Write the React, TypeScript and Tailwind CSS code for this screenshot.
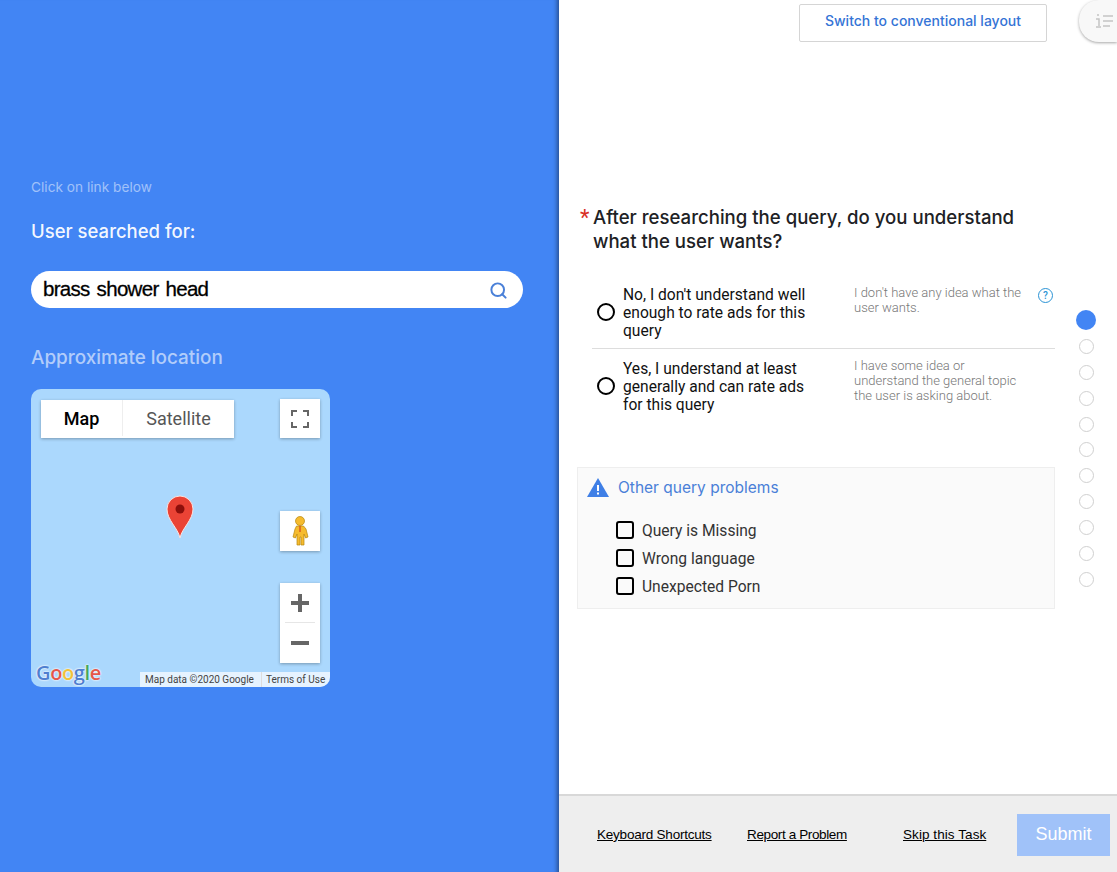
import { Search } from 'lucide-react'

const options = [
  {
    label: "No, I don't understand well enough to rate ads for this query",
    hint: "I don't have any idea what the user wants.",
    help: true,
    rowClass: 'h-[73px] border-b',
  },
  {
    label: 'Yes, I understand at least generally and can rate ads for this query',
    hint: 'I have some idea or understand the general topic the user is asking about.',
    help: false,
    rowClass: 'h-[74px]',
  },
]

const problems = ['Query is Missing', 'Wrong language', 'Unexpected Porn']

const steps = [0, 1, 2, 3, 4, 5, 6, 7, 8, 9, 10]

function MapPanel() {
  return (
    <div className="relative mt-[17px] h-[298px] w-[299px] overflow-hidden rounded-[10px] bg-[#abd8fd]">
      {/* map type */}
      <div className="absolute left-[10px] top-[11px] flex h-[38px] w-[193px] bg-white pb-[2px] text-[18px] shadow-[0_1px_3px_rgba(0,0,0,0.3)]">
        <div className="flex w-[82px] items-center justify-center border-r border-[#eee] font-medium text-black">Map</div>
        <div className="flex flex-1 items-center justify-center text-[#565656]">Satellite</div>
      </div>
      {/* fullscreen */}
      <div className="absolute left-[249px] top-[10px] flex h-[39px] w-[40px] items-center justify-center bg-white shadow-[0_1px_3px_rgba(0,0,0,0.3)]">
        <svg width="18" height="18" viewBox="0 0 18 18" fill="none" stroke="#666" strokeWidth="2">
          <path d="M1 6V1h5M12 1h5v5M17 12v5h-5M6 17H1v-5" />
        </svg>
      </div>
      {/* marker */}
      <svg className="absolute left-[135px] top-[106px]" width="28" height="44" viewBox="0 0 28 44">
        <path d="M14 43C12 33 1 25 1 14a13 13 0 0 1 26 0C27 25 16 33 14 43Z" fill="#ea4335" stroke="#fbe3e0" strokeWidth="1" />
        <circle cx="14" cy="14" r="4.5" fill="#8c0f0b" />
      </svg>
      {/* pegman */}
      <div className="absolute left-[249px] top-[122px] flex h-[40px] w-[40px] items-center justify-center bg-white shadow-[0_1px_3px_rgba(0,0,0,0.3)]">
        <svg width="18" height="30" viewBox="0 0 18 30" stroke="#b5860f" strokeWidth="0.7" fill="#f6bb2e">
          <circle cx="9" cy="5" r="4.5" />
          <path d="M5.5 10h7l2.5 3 2 8-2.4 1-1.6-4V29h-3v-8h-1v8h-3V18l-1.6 4-2.4-1 2-8Z" />
          <path d="M9 10v6" stroke="#d9541e" strokeWidth="1.4" />
        </svg>
      </div>
      {/* zoom */}
      <div className="absolute left-[249px] top-[194px] flex h-[80px] w-[40px] flex-col items-center bg-white shadow-[0_1px_3px_rgba(0,0,0,0.3)]">
        <div className="flex h-[40px] w-[30px] items-center justify-center border-b border-[#e6e6e6]">
          <svg width="18" height="18" viewBox="0 0 18 18" fill="#666">
            <path d="M7 0h4v7h7v4h-7v7H7v-7H0V7h7Z" />
          </svg>
        </div>
        <div className="flex h-[40px] w-[30px] items-center justify-center">
          <svg width="18" height="18" viewBox="0 0 18 18" fill="#666">
            <path d="M0 7h18v4H0Z" />
          </svg>
        </div>
      </div>
      {/* google logo */}
      <div className="absolute bottom-[2px] left-[5px] font-['Open_Sans',sans-serif] text-[20px] font-semibold leading-[24px] tracking-[-0.4px] [text-shadow:0_0_2px_white,0_0_2px_white]">
        <span className="text-[#4f7fd0]">G</span>
        <span className="text-[#e4574b]">o</span>
        <span className="text-[#f0c23c]">o</span>
        <span className="text-[#4f7fd0]">g</span>
        <span className="text-[#46a85a]">l</span>
        <span className="text-[#e4574b]">e</span>
      </div>
      {/* attribution */}
      <div className="absolute bottom-0 right-0 flex h-[15px] items-center bg-white/70 text-[10px] text-[#444]">
        <span className="flex h-full w-[121px] items-center pl-[5px]">Map data ©2020 Google</span>
        <span className="flex h-full w-[69px] items-center border-l border-[#ddd] pl-[4px]">Terms of Use</span>
      </div>
    </div>
  )
}

function LeftPanel() {
  return (
    <div className="h-[872px] w-[559px] shrink-0 bg-[#4285f4] pl-[31px] pt-[177px] shadow-[inset_-6px_0_4px_-4px_rgba(0,0,0,0.4)]">
      <div className="font-['Inter',sans-serif] text-[13.7px] leading-[20px] text-white/50">Click on link below</div>
      <div className="mt-[20px] font-['Inter',sans-serif] text-[18.5px] font-medium leading-[28px] text-white/95">User searched for:</div>
      <div className="mt-[26px] flex h-[37px] w-[492px] items-center justify-between rounded-full bg-white pl-[12px] pr-[15px]">
        <span className="font-['Liberation_Sans',sans-serif] text-[20.5px] font-medium tracking-[-0.7px] text-black [-webkit-text-stroke:0.3px_black] [word-spacing:2px]">brass shower head</span>
        <Search size={19} strokeWidth={2.5} className="mt-[1px] text-[#4a80d8]" />
      </div>
      <div className="mt-[36px] font-['Inter',sans-serif] text-[18.9px] font-medium leading-[28px] text-white/60">Approximate location</div>
      <MapPanel />
    </div>
  )
}

function OptionRow({ label, hint, help, rowClass }: { label: string; hint: string; help: boolean; rowClass: string }) {
  return (
    <div className={`flex items-center border-[#ddd] pl-[5px] ${rowClass}`}>
      <div className="h-[18px] w-[18px] shrink-0 rounded-full border-2 border-black" />
      <div className="ml-[8px] w-[200px] shrink-0 pt-[2px] text-[15.6px] leading-[18px] text-[#111]">{label}</div>
      <div className="ml-[31px] mt-[9px] w-[170px] shrink-0 self-start text-[13px] font-light leading-[15px] text-[#777]">{hint}</div>
      {help && (
        <div className="ml-[14px] mt-[12px] flex h-[15px] w-[15px] items-center justify-center self-start rounded-full border-[1.5px] border-[#2a93d5] text-[10px] font-medium text-[#2a93d5]">
          ?
        </div>
      )}
    </div>
  )
}

function QuestionColumn() {
  return (
    <div className="w-[478px] shrink-0">
      <div className="flex">
        <span className="w-[16px] shrink-0 pl-[3px] text-[22px] leading-[26px] text-[#d93025]">*</span>
        <h2 className="mb-[1px] w-[450px] font-['Inter',sans-serif] text-[18.6px] font-medium leading-[24px] text-[#202124]">
          After researching the query, do you understand what the user wants?
        </h2>
      </div>
      <div className="ml-[15px] mt-[22px]">
        {options.map((o) => (
          <OptionRow key={o.label} {...o} />
        ))}
      </div>
      <div className="mt-[44px] h-[142px] border border-[#eeeeee] bg-[#fafafa]">
        <div className="flex h-[39px] items-center pl-[9px]">
          <svg width="22" height="19" viewBox="0 0 22 19">
            <path d="M11 0 22 19H0Z" fill="#3f7fe6" />
            <rect x="10" y="7" width="2" height="6" fill="#fff" />
            <rect x="10" y="14.5" width="2" height="2" fill="#fff" />
          </svg>
          <span className="ml-[9px] font-['Inter',sans-serif] text-[15.5px] text-[#4a80d8]">Other query problems</span>
        </div>
        <div className="mt-[9px] pl-[38px]">
          {problems.map((p) => (
            <div key={p} className="flex h-[28px] items-center">
              <div className="h-[18px] w-[18px] rounded-[3px] border-2 border-black" />
              <span className="ml-[8px] pt-[3px] text-[15.6px] text-[#333]">{p}</span>
            </div>
          ))}
        </div>
      </div>
    </div>
  )
}

function Footer() {
  return (
    <div className="flex h-[78px] shrink-0 items-center border-t-2 border-[#d8d8d8] bg-[#eeeeee] pl-[38px] font-['Liberation_Sans',sans-serif] text-[13.5px] text-black">
      <a className="mt-[2px] w-[150px] tracking-[-0.22px] underline">Keyboard Shortcuts</a>
      <a className="mt-[2px] w-[156px] tracking-[-0.37px] underline">Report a Problem</a>
      <a className="mt-[2px] w-[114px] tracking-[0.07px] underline">Skip this Task</a>
      <button className="mt-[2px] h-[42px] w-[93px] bg-[#a0c2f9] pb-[2px] text-[18px] text-white">Submit</button>
    </div>
  )
}

export default function App() {
  return (
    <div className="flex h-[872px] w-[1117px] overflow-hidden bg-white font-['Roboto',sans-serif]">
      <LeftPanel />
      <div className="flex min-w-0 flex-1 flex-col">
        <div className="flex-1">
          <div className="flex h-[205px] items-start">
            <button className="ml-[240px] mt-[4px] h-[38px] w-[248px] rounded-[2px] border border-[#d5d5d5] pb-[6px] font-['Inter',sans-serif] text-[14px] font-medium text-[#3574d6]">
              Switch to conventional layout
            </button>
            <div className="ml-[32px] flex h-[42px] w-[38px] items-center rounded-bl-[20px] rounded-tl-[20px] bg-[#f8f8f8] pl-[16px] shadow-[0_1px_3px_rgba(0,0,0,0.35)]">
              <svg width="20" height="16" viewBox="0 0 20 16" fill="none" stroke="#c4c4c4" strokeWidth="1.5">
                <path d="M3 1v2M1 6h3v7M1 14h5M8 3h10M8 8h10M8 13h7" />
              </svg>
            </div>
          </div>
          <div className="flex pl-[18px]">
            <QuestionColumn />
            <div className="ml-[21px] mt-[105px] flex w-[20px] flex-col items-center">
              {steps.map((s) =>
                s === 0 ? (
                  <div key={s} className="-mb-[2px] h-[20px] w-[20px] rounded-full bg-[#4285f4]" />
                ) : (
                  <div key={s} className="mt-[10.9px] h-[15px] w-[15px] rounded-full border border-[#d0d0d0]" />
                ),
              )}
            </div>
          </div>
        </div>
        <Footer />
      </div>
    </div>
  )
}
